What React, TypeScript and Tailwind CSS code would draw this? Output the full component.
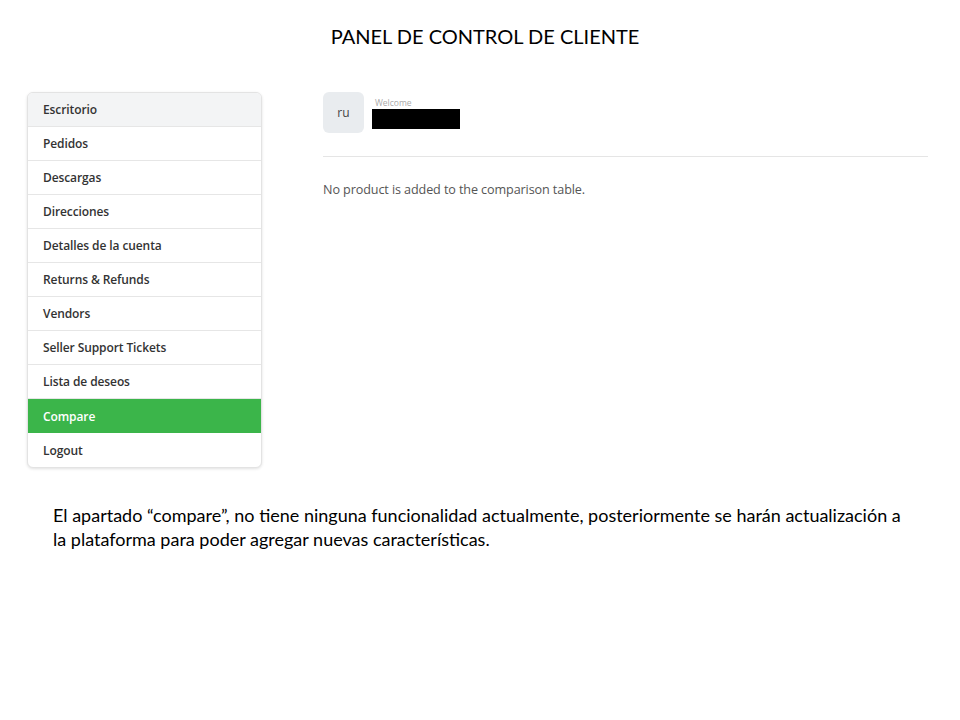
const items = [
  "Escritorio",
  "Pedidos",
  "Descargas",
  "Direcciones",
  "Detalles de la cuenta",
  "Returns & Refunds",
  "Vendors",
  "Seller Support Tickets",
  "Lista de deseos",
  "Compare",
  "Logout",
];

function Sidebar() {
  return (
    <nav className="w-[235px] shrink-0 rounded-md border border-[#e3e3e3] bg-white shadow-[0_1px_3px_rgba(0,0,0,0.12)] overflow-hidden">
      {items.map((label, i) => {
        const active = label === "Compare";
        const first = i === 0;
        return (
          <div
            key={label}
            className={
              active
                ? "h-[34px] flex items-center px-[15px] bg-[#3bb54a] text-white font-semibold text-[12px] tracking-[-0.1px] pt-[1px]"
                : first
                ? "h-[34px] flex items-center px-[15px] bg-[#f3f4f5] text-[#333] font-semibold text-[12px] tracking-[-0.1px] pt-[1px] border-b border-[#e6e6e6]"
                : "h-[34px] flex items-center px-[15px] text-[#333] font-semibold text-[12px] tracking-[-0.1px] pt-[1px] border-b border-[#e6e6e6] last:border-b-0"
            }
          >
            {label}
          </div>
        );
      })}
    </nav>
  );
}

function Content() {
  return (
    <div className="flex-1">
      <div className="flex items-start gap-[8px]">
        <div className="w-[41px] h-[41px] rounded-md bg-[#e9ecef] flex items-center justify-center text-[12px] text-[#444]">
          ru
        </div>
        <div className="pt-[6px]">
          <div className="text-[8.5px] leading-[10px] text-[#aaa] pl-[3px]">Welcome</div>
          <div className="w-[88px] h-[20px] bg-black mt-[1px]"></div>
        </div>
      </div>
      <div className="h-px bg-[#e5e5e5] mt-[23px]"></div>
      <p className="mt-[24px] text-[12.6px] text-[#555] tracking-[-0.1px]">No product is added to the comparison table.</p>
    </div>
  );
}

export default function App() {
  return (
    <div className="w-[960px] h-[720px] bg-white relative font-['Open_Sans',sans-serif]">
      <h1 className="pt-[22px] text-center text-[20px] leading-[28px] text-black font-['Lato',sans-serif] ml-[10px]">
        PANEL DE CONTROL DE CLIENTE
      </h1>
      <div className="flex gap-[61px] pl-[27px] pr-[32px] mt-[42px]">
        <Sidebar />
        <Content />
      </div>
      <p className="ml-[53px] mt-[35px] w-[855px] text-[18px] leading-[24px] text-black font-['Lato',sans-serif]">
        El apartado “compare”, no tiene ninguna funcionalidad actualmente, posteriormente se harán actualización a la plataforma para poder agregar nuevas características.
      </p>
    </div>
  );
}
